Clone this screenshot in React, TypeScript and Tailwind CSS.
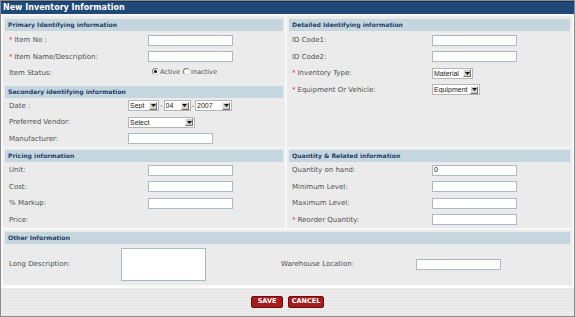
import React from "react";

const Req = () => <span className="mr-[2px] text-[#e0405a]">*</span>;

function Input({ value = "", className = "w-[85px]" }: { value?: string; className?: string }) {
  return (
    <div
      className={`flex h-[11px] items-center border border-[#a9bac6] bg-white pl-[1px] font-['Liberation_Sans',sans-serif] text-[7px] text-[#222] ${className}`}
    >
      {value}
    </div>
  );
}

function Select({ text, className }: { text: string; className: string }) {
  return (
    <div
      className={`flex h-[11px] items-center border border-[#b5b5b5] bg-white pl-[1px] pr-[1px] font-['Liberation_Sans',sans-serif] text-[7px] text-[#222] ${className}`}
    >
      <span className="flex-1 overflow-hidden whitespace-nowrap leading-none">{text}</span>
      <span className="flex h-[8px] w-[8px] items-center justify-center border border-b-[#707070] border-l-[#f4f4f4] border-r-[#707070] border-t-[#f4f4f4] bg-[#d4d0c8]">
        <svg width="5" height="3" viewBox="0 0 5 3">
          <path d="M0 0 H5 L2.5 3 Z" fill="#111" />
        </svg>
      </span>
    </div>
  );
}

function Header({ children }: { children: React.ReactNode }) {
  return (
    <div className="flex h-[12px] items-center bg-[#c6d6de] pl-[3px] text-[6.1px] font-bold text-[#1f3f6b]">
      {children}
    </div>
  );
}

function Row({
  label,
  req = false,
  labelW = "w-[143px] pl-[4px]",
  children,
}: {
  label: string;
  req?: boolean;
  labelW?: string;
  children?: React.ReactNode;
}) {
  return (
    <div className="flex h-[16.5px] items-center">
      <div className={`shrink-0 whitespace-nowrap ${labelW}`}>
        {req && <Req />}
        {label}
      </div>
      {children}
    </div>
  );
}

function Radio({ checked }: { checked?: boolean }) {
  return (
    <span className="relative top-[-2px] mr-[1px] inline-flex h-[7px] w-[7px] items-center justify-center rounded-full border border-b-[#ddd] border-l-[#777] border-r-[#ddd] border-t-[#777] bg-white">
      {checked && <span className="h-[3px] w-[3px] rounded-full bg-black" />}
    </span>
  );
}

export default function App() {
  return (
    <div className="flex h-[317px] w-[575px] flex-col border border-[#8c8c8c] bg-[#f8f8f8] font-['DejaVu_Sans',Verdana,sans-serif] text-[7px] text-[#505050]">
      <div className="flex h-[13px] items-center border-t border-t-[#14355a] bg-[#1f4a77] pl-[2px] text-[8px] font-bold text-white">
        New Inventory Information
      </div>

      <div className="flex flex-col gap-[2px] px-[2px] pt-[2px]">
        <div className="grid grid-cols-[282px_1fr] gap-x-[2px] gap-y-[1px]">
          {/* Left top */}
          <div className="h-[131px] bg-[#ebebeb] px-[2px] pt-[3px]">
            <Header>Primary Identifying information</Header>
            <div className="mt-[1px]">
              <Row label="Item No :" req>
                <Input />
              </Row>
              <Row label="Item Name/Description:" req>
                <Input />
              </Row>
              <Row label="Item Status:">
                <div className="ml-[4px] flex items-center text-[6.5px]">
                  <Radio checked />
                  <span className="mr-[3px]">Active</span>
                  <Radio />
                  <span>Inactive</span>
                </div>
              </Row>
            </div>
            <div className="mt-[4px]">
              <Header>Secondary identifying information</Header>
              <Row label="Date :" labelW="w-[123px] pl-[4px]">
                <Select text="Sept" className="w-[31px]" />
                <span className="mx-[1px]">-</span>
                <Select text="04" className="w-[27px]" />
                <span className="mx-[1px]">-</span>
                <Select text="2007" className="w-[37px]" />
              </Row>
              <Row label="Preferred Vendor:" labelW="w-[123px] pl-[4px]">
                <Select text="Select" className="w-[67px]" />
              </Row>
              <Row label="Manufacturer:" labelW="w-[123px] pl-[4px]">
                <Input />
              </Row>
            </div>
          </div>

          {/* Right top */}
          <div className="h-[131px] bg-[#ebebeb] px-[2px] pt-[3px]">
            <Header>Detailed Identifying information</Header>
            <div className="mt-[1px]">
              <Row label="ID Code1:" labelW="w-[143px] pl-[3px]">
                <Input />
              </Row>
              <Row label="ID Code2:" labelW="w-[143px] pl-[3px]">
                <Input />
              </Row>
              <Row label="Inventory Type:" req labelW="w-[143px] pl-[3px]">
                <Select text="Material" className="w-[41px]" />
              </Row>
              <Row label="Equipment Or Vehicle:" req labelW="w-[143px] pl-[3px]">
                <Select text="Equipment" className="w-[48px]" />
              </Row>
            </div>
          </div>

          {/* Pricing */}
          <div className="h-[80px] bg-[#ebebeb] px-[2px] pt-[2px]">
            <Header>Pricing information</Header>
            <Row label="Unit:">
              <Input />
            </Row>
            <Row label="Cost:">
              <Input />
            </Row>
            <Row label="% Markup:">
              <Input />
            </Row>
            <Row label="Price:" />
          </div>

          {/* Quantity */}
          <div className="h-[80px] bg-[#ebebeb] px-[2px] pt-[2px]">
            <Header>Quantity &amp; Related information</Header>
            <Row label="Quantity on hand:" labelW="w-[143px] pl-[3px]">
              <Input value="0" />
            </Row>
            <Row label="Minimum Level:" labelW="w-[143px] pl-[3px]">
              <Input />
            </Row>
            <Row label="Maximum Level:" labelW="w-[143px] pl-[3px]">
              <Input />
            </Row>
            <Row label="Reorder Quantity:" req labelW="w-[143px] pl-[3px]">
              <Input />
            </Row>
          </div>
        </div>

        {/* Other */}
        <div className="h-[55px] bg-[#ebebeb] px-[2px] pt-[2px]">
          <Header>Other Information</Header>
          <div className="mt-[4px] flex items-center">
            <div className="w-[116px] shrink-0 pl-[4px]">Long Description:</div>
            <div className="h-[33px] w-[85px] border border-[#a9bac6] bg-white" />
            <div className="ml-[75px] w-[135px] shrink-0">Warehouse Location:</div>
            <Input />
          </div>
        </div>
      </div>

      <div className="mt-[2px] flex flex-1 items-center justify-center gap-[5px] border-t border-t-white bg-[repeating-linear-gradient(to_bottom,#eeeeee_0px,#eeeeee_1px,#e4e4e4_1px,#e4e4e4_2px)]">
        <div className="flex h-[12px] w-[32px] items-center justify-center rounded-[2px] border border-[#6e0c0c] bg-[#a51c1c] text-[6.5px] font-bold text-white">
          SAVE
        </div>
        <div className="flex h-[12px] w-[36px] items-center justify-center rounded-[2px] border border-[#6e0c0c] bg-[#a51c1c] text-[6.5px] font-bold text-white">
          CANCEL
        </div>
      </div>
    </div>
  );
}
